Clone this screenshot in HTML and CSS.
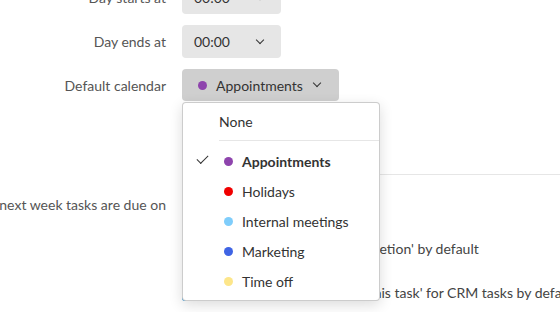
FILE: index.html
```html
<!DOCTYPE html>
<html lang="en">
<head>
    <meta charset="UTF-8">
    <title>Calendar settings</title>
    <link rel="stylesheet" href="styles.css">
</head>
<body>
    <div class="settings">
        <div class="row">
            <div class="label">Day starts at</div>
            <div class="select">00:00 <span class="chev"></span></div>
        </div>
        <div class="row">
            <div class="label">Day ends at</div>
            <div class="select">00:00 <span class="chev"></span></div>
        </div>
        <div class="row">
            <div class="label">Default calendar</div>
            <div class="picker">
                <div class="select open">
                    <span class="dot" style="background:#8e44ad"></span>
                    Appointments
                    <span class="chev"></span>
                </div>
                <ul class="menu">
                    <li class="none">None</li>
                    <li class="sep"></li>
                    <li class="selected"><span class="tick"></span><span class="dot" style="background:#8e44ad"></span>Appointments</li>
                    <li><span class="dot" style="background:#f00000"></span>Holidays</li>
                    <li><span class="dot" style="background:#7fcdfb"></span>Internal meetings</li>
                    <li><span class="dot" style="background:#3f64e4"></span>Marketing</li>
                    <li><span class="dot" style="background:#fde68a"></span>Time off</li>
                </ul>
            </div>
        </div>

        <div class="divider"></div>

        <div class="row due">
            <div class="label">Show days when next week tasks are due on</div>
            <div></div>
        </div>
        <div class="row check">
            <div></div>
            <label><span class="box"></span>Mark as 'Waiting for completion' by default</label>
        </div>
        <div class="row check">
            <div></div>
            <label><span class="box"></span>Tick 'Add a follow-up for this task' for CRM tasks by default</label>
        </div>
    </div>
</body>
</html>
```

FILE: styles.css
```css
body {
    margin: 0;
    font-family: Lato, "Open Sans", sans-serif;
    font-size: 14px;
    color: #333;
    background-color: #fff;
    overflow: hidden;
}

.settings {
    margin-top: -19px;
    overflow: hidden;
}

.row {
    display: grid;
    grid-template-columns: 166px 1fr;
    column-gap: 16px;
    align-items: center;
    margin-bottom: 11px;
}

.label {
    justify-self: end;
    white-space: nowrap;
    color: #555;
}

.select {
    display: inline-flex;
    align-items: center;
    width: 99px;
    height: 33px;
    padding: 0 12px;
    box-sizing: border-box;
    background-color: #e6e6e6;
    border-radius: 4px;
    color: #333;
}

.select .chev {
    margin-left: auto;
    width: 5px;
    height: 5px;
    border-right: 1.5px solid #333;
    border-bottom: 1.5px solid #333;
    transform: rotate(45deg);
    margin-top: -4px;
    margin-right: 6px;
}

.select.open {
    width: 157px;
    height: 32px;
    padding: 0 16px;
    background-color: #cfcfcf;
}

.select.open .chev {
    margin-right: 3px;
}

.select .dot {
    margin-right: 9px;
}

.picker {
    position: relative;
}

.dot {
    display: inline-block;
    width: 9px;
    height: 9px;
    border-radius: 50%;
    flex-shrink: 0;
}

.menu {
    position: absolute;
    top: 33px;
    left: 0;
    z-index: 2;
    width: 198px;
    margin: 0;
    padding: 3px 0 4px;
    list-style: none;
    background-color: #fff;
    border: 1px solid rgba(0, 0, 0, 0.2);
    border-radius: 4px;
    box-sizing: border-box;
    box-shadow: 0 4px 14px rgba(0, 0, 0, 0.14);
}

.menu li {
    display: flex;
    align-items: center;
    height: 30px;
    padding-left: 41px;
    position: relative;
}

.menu li .dot {
    margin-right: 9px;
}

.menu li.none {
    padding-left: 36px;
}

.menu li.sep {
    height: 1px;
    margin: 4px 0 5px 36px;
    padding: 0;
    background-color: #e6e6e6;
}

.menu li.selected {
    font-weight: bold;
}

.tick {
    position: absolute;
    left: 14px;
    top: 9px;
    width: 10px;
    height: 5px;
    border-left: 1.5px solid #333;
    border-bottom: 1.5px solid #333;
    transform: rotate(-45deg);
}

.divider {
    height: 1px;
    margin: 73px 0 0 182px;
    background-color: #e6e6e6;
}

.due {
    margin-top: 21px;
}

.check label {
    display: flex;
    align-items: center;
    height: 18px;
    white-space: nowrap;
    color: #444;
}

.check {
    margin-top: 26px;
}

.box {
    width: 18px;
    height: 18px;
    margin-right: 15px;
    background-color: #0b8ad9;
    border-radius: 3px;
    flex-shrink: 0;
}
```
